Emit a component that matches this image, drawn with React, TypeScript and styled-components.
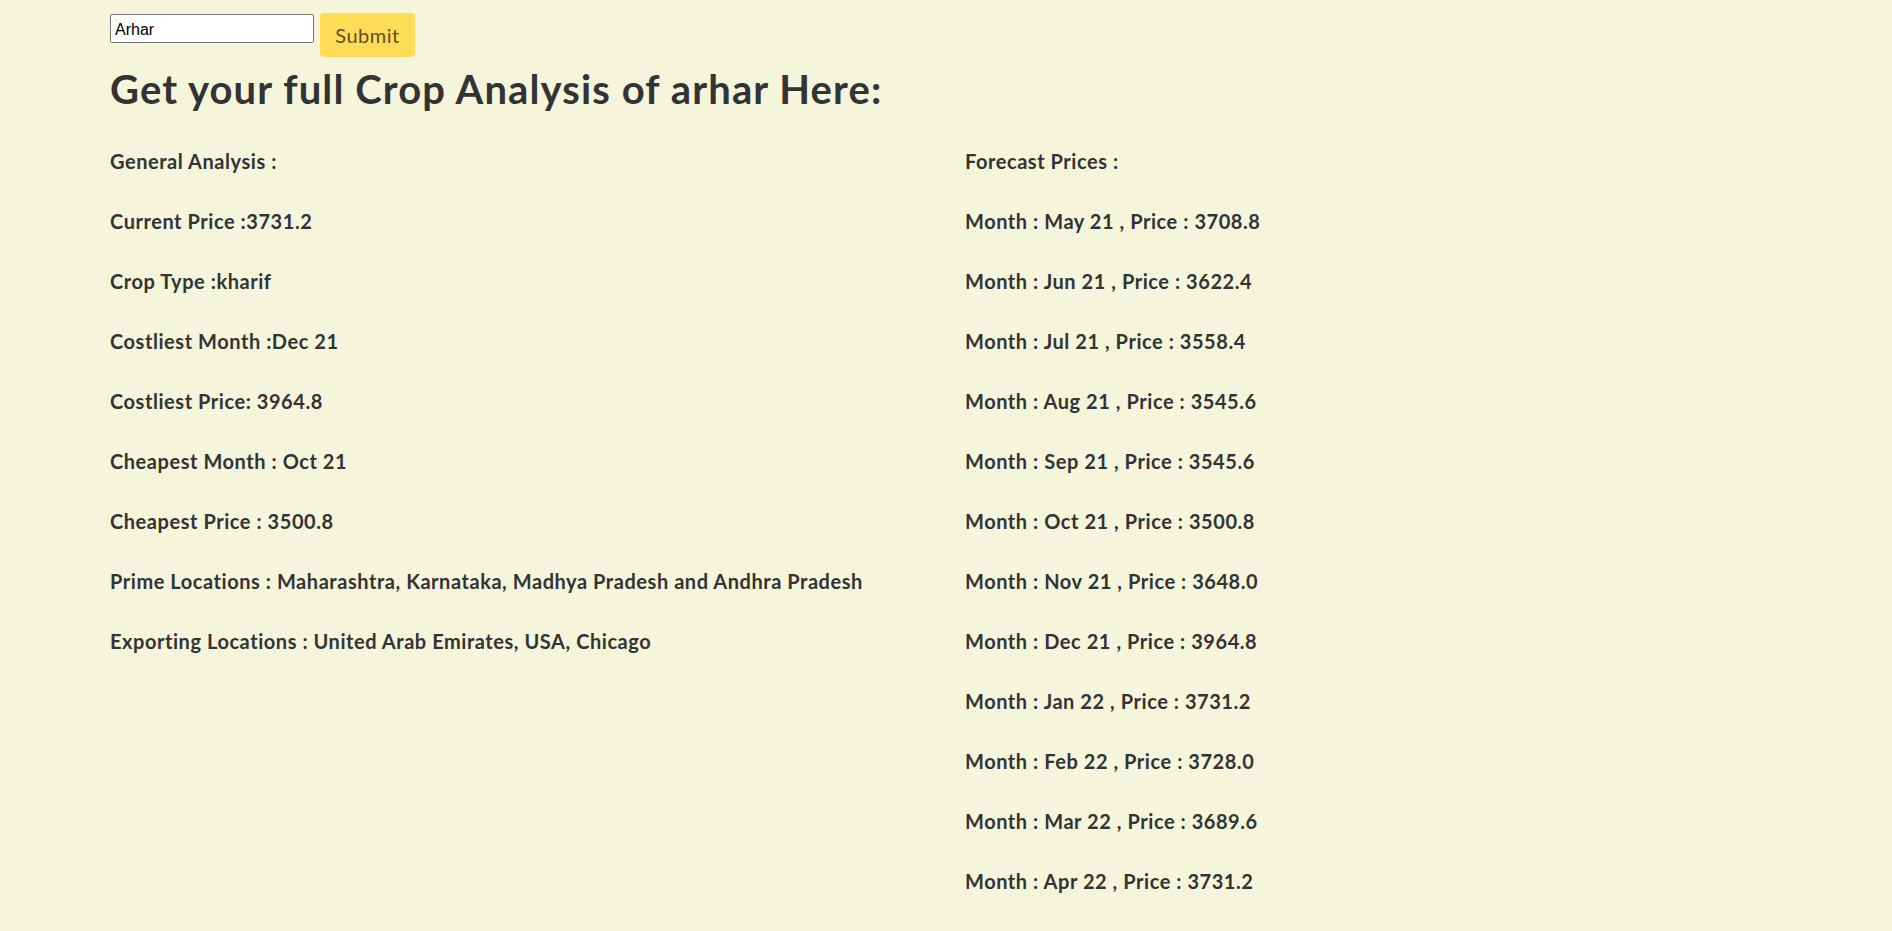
import React from "react";
import styled, { createGlobalStyle } from "styled-components";

const Global = createGlobalStyle`
  html, body {
    margin: 0;
    padding: 0;
    background: #f5f5dc;
  }
  body {
    font-family: "Lato", "Open Sans", sans-serif;
    color: #333333;
    min-height: 931px;
  }
`;

const Page = styled.div`
  padding: 13px 0 0 110px;
`;

const SearchForm = styled.form`
  display: flex;
  align-items: flex-start;
  gap: 6px;
  margin: 0;
`;

const CropInput = styled.input`
  box-sizing: border-box;
  width: 204px;
  height: 29px;
  margin-top: 1px;
  padding: 3px 3px 0 4px;
  border: 1px solid #767676;
  border-radius: 2px;
  background: #ffffff;
  font-family: "Liberation Sans", Arial, sans-serif;
  font-size: 16px;
  color: #000;
  outline: none;
`;

const SubmitButton = styled.button`
  box-sizing: border-box;
  width: 95px;
  height: 44px;
  border: none;
  border-radius: 4px;
  background: #ffdc56;
  color: #5e4d1e;
  font-family: "Lato", "Open Sans", sans-serif;
  font-size: 20px;
  letter-spacing: 0.5px;
  cursor: pointer;
`;

const Title = styled.h1`
  margin: 8px 0 36px;
  font-size: 40px;
  line-height: 48px;
  font-weight: 700;
  letter-spacing: 1.1px;
  color: #333333;
`;

const Columns = styled.div`
  display: grid;
  grid-template-columns: 855px auto;
  align-items: start;
`;

const Column = styled.div`
  display: flex;
  flex-direction: column;
  gap: 36px;
`;

const Line = styled.div`
  font-size: 20px;
  line-height: 24px;
  font-weight: 700;
  letter-spacing: 0.55px;
  color: #333333;
  white-space: nowrap;
`;

const general = [
  "General Analysis :",
  "Current Price :3731.2",
  "Crop Type :kharif",
  "Costliest Month :Dec 21",
  "Costliest Price: 3964.8",
  "Cheapest Month : Oct 21",
  "Cheapest Price : 3500.8",
  "Prime Locations : Maharashtra, Karnataka, Madhya Pradesh and Andhra Pradesh",
  "Exporting Locations : United Arab Emirates, USA, Chicago",
];

const forecast: [string, string][] = [
  ["May 21", "3708.8"],
  ["Jun 21", "3622.4"],
  ["Jul 21", "3558.4"],
  ["Aug 21", "3545.6"],
  ["Sep 21", "3545.6"],
  ["Oct 21", "3500.8"],
  ["Nov 21", "3648.0"],
  ["Dec 21", "3964.8"],
  ["Jan 22", "3731.2"],
  ["Feb 22", "3728.0"],
  ["Mar 22", "3689.6"],
  ["Apr 22", "3731.2"],
];

export default function App() {
  return (
    <Page>
      <Global />
      <SearchForm onSubmit={(e) => e.preventDefault()}>
        <CropInput defaultValue="Arhar" />
        <SubmitButton type="submit">Submit</SubmitButton>
      </SearchForm>
      <Title>Get your full Crop Analysis of arhar Here:</Title>
      <Columns>
        <Column>
          {general.map((t) => (
            <Line key={t}>{t}</Line>
          ))}
        </Column>
        <Column>
          <Line>Forecast Prices :</Line>
          {forecast.map(([m, p]) => (
            <Line key={m}>
              Month : {m} , Price : {p}
            </Line>
          ))}
        </Column>
      </Columns>
    </Page>
  );
}
